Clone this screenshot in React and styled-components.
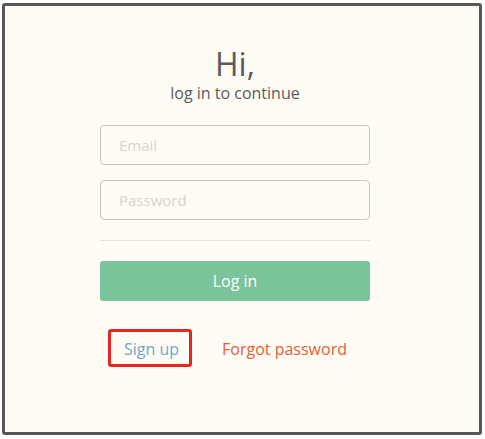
import React from "react";
import styled, { createGlobalStyle } from "styled-components";

const Global = createGlobalStyle`
  html, body { margin: 0; padding: 0; background: #ffffff; }
  body { font-family: "Open Sans", "Noto Sans", sans-serif; }
  * { box-sizing: border-box; }
`;

const Frame = styled.div`
  margin: 3px 0 0 2px;
  width: 480px;
  height: 432px;
  border: 3px solid #585856;
  border-radius: 3px;
  background: #fffcf5;
  padding: 0 0 0 95px;
`;

const Column = styled.form`
  width: 270px;
  display: flex;
  flex-direction: column;
`;

const Title = styled.h1`
  margin: 38px 0 0;
  font-size: 32px;
  line-height: 40px;
  font-weight: 400;
  color: #5b5b5b;
  text-align: center;
`;

const Subtitle = styled.p`
  margin: -1px 0 0;
  font-size: 16px;
  line-height: 20px;
  color: #5b5b5b;
  text-align: center;
`;

const Input = styled.input`
  display: block;
  width: 270px;
  height: 40px;
  margin-top: ${(p) => p.$top}px;
  padding: 0 18px;
  border: 1px solid #ccc6b8;
  border-radius: 4px;
  background: #fffcf5;
  font-family: inherit;
  font-size: 15px;
  color: #555;
  outline: none;
  &::placeholder { color: #d6d3cc; }
`;

const Divider = styled.hr`
  margin: 20px 0 0;
  border: 0;
  border-top: 1px solid #e4e0d8;
  height: 0;
`;

const Button = styled.button`
  margin-top: 20px;
  height: 40px;
  border: 0;
  border-radius: 3px;
  background: #7bc39a;
  color: #ffffff;
  font-family: inherit;
  font-size: 16px;
`;

const Links = styled.div`
  display: flex;
  align-items: center;
  margin: 28px 0 0 8px;
`;

const SignUp = styled.a`
  display: flex;
  align-items: center;
  height: 38px;
  padding: 2px 10px 0 13px;
  border: 3px solid #e8251f;
  border-radius: 3px;
  color: #6fa9c1;
  font-size: 16px;
  text-decoration: none;
`;

const Forgot = styled.a`
  margin: 2px 0 0 30px;
  color: #df6235;
  font-size: 16px;
  text-decoration: none;
`;

export default function App() {
  return (
    <>
      <Global />
      <Frame>
        <Column onSubmit={(e) => e.preventDefault()}>
          <Title>Hi,</Title>
          <Subtitle>log in to continue</Subtitle>
          <Input $top={22} type="email" placeholder="Email" />
          <Input $top={15} type="password" placeholder="Password" />
          <Divider />
          <Button type="submit">Log in</Button>
          <Links>
            <SignUp href="#">Sign up</SignUp>
            <Forgot href="#">Forgot password</Forgot>
          </Links>
        </Column>
      </Frame>
    </>
  );
}
